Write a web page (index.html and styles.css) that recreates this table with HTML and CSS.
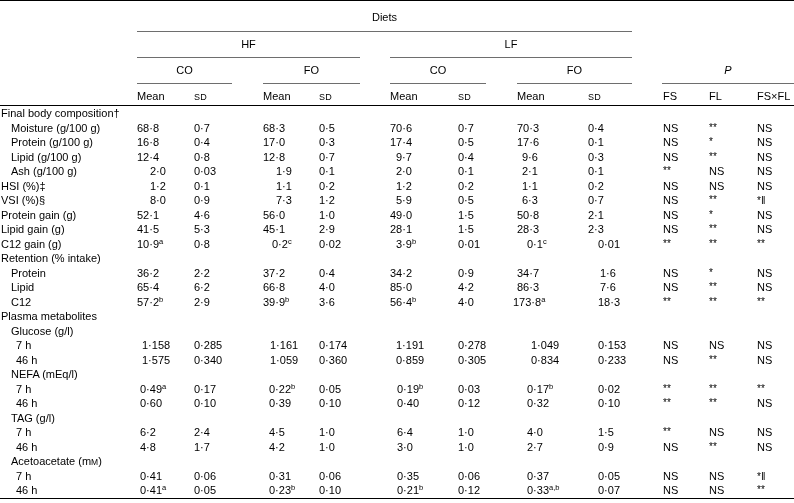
FILE: index.html
```html
<!DOCTYPE html>
<html>
<head>
<meta charset="utf-8">
<link rel="stylesheet" href="styles.css">
</head>
<body>
<div class="tbl">
  <div class="head">
    <div class="h r1 sp-diets ul">Diets</div>
    <div class="h r2 sp-hf ul">HF</div>
    <div class="h r2 sp-lf ul">LF</div>
    <div class="h r3 sp-co1 ul">CO</div>
    <div class="h r3 sp-fo1 ul">FO</div>
    <div class="h r3 sp-co2 ul">CO</div>
    <div class="h r3 sp-fo2 ul">FO</div>
    <div class="h r3 sp-p ul"><i>P</i></div>
    <div class="h r4 lft c2">Mean</div>
    <div class="h r4 lft c3"><span class="sc">SD</span></div>
    <div class="h r4 lft c5">Mean</div>
    <div class="h r4 lft c6"><span class="sc">SD</span></div>
    <div class="h r4 lft c8">Mean</div>
    <div class="h r4 lft c9"><span class="sc">SD</span></div>
    <div class="h r4 lft c11">Mean</div>
    <div class="h r4 lft c12"><span class="sc">SD</span></div>
    <div class="h r4 lft c14 fs">FS</div>
    <div class="h r4 lft c15">FL</div>
    <div class="h r4 lft c16">FS×FL</div>
  </div>
  <div class="body">
    <div class="sec l0">Final body composition†</div>

    <div class="l1">Moisture (g/100 g)</div><span>68·8</span><span>0·7</span><span>68·3</span><span>0·5</span><span>70·6</span><span>0·7</span><span>70·3</span><span>0·4</span><span>NS</span><span class="st">**</span><span>NS</span>

    <div class="l1">Protein (g/100 g)</div><span>16·8</span><span>0·4</span><span>17·0</span><span>0·3</span><span>17·4</span><span>0·5</span><span>17·6</span><span>0·1</span><span>NS</span><span class="st">*</span><span>NS</span>

    <div class="l1">Lipid (g/100 g)</div><span>12·4</span><span>0·8</span><span>12·8</span><span>0·7</span><span class="o6">9·7</span><span>0·4</span><span class="o5">9·6</span><span>0·3</span><span>NS</span><span class="st">**</span><span>NS</span>

    <div class="l1">Ash (g/100 g)</div><span class="o13">2·0</span><span>0·03</span><span class="o13">1·9</span><span>0·1</span><span class="o6">2·0</span><span>0·1</span><span class="o5">2·1</span><span>0·1</span><span class="st">**</span><span>NS</span><span>NS</span>

    <div class="l0">HSI (%)‡</div><span class="o13">1·2</span><span>0·1</span><span class="o13">1·1</span><span>0·2</span><span class="o6">1·2</span><span>0·2</span><span class="o5">1·1</span><span>0·2</span><span>NS</span><span>NS</span><span>NS</span>

    <div class="l0">VSI (%)§</div><span class="o13">8·0</span><span>0·9</span><span class="o13">7·3</span><span>1·2</span><span class="o6">5·9</span><span>0·5</span><span class="o5">6·3</span><span>0·7</span><span>NS</span><span class="st">**</span><span><span class="st">*</span>‖</span>

    <div class="l0">Protein gain (g)</div><span>52·1</span><span>4·6</span><span>56·0</span><span>1·0</span><span>49·0</span><span>1·5</span><span>50·8</span><span>2·1</span><span>NS</span><span class="st">*</span><span>NS</span>

    <div class="l0">Lipid gain (g)</div><span>41·5</span><span>5·3</span><span>45·1</span><span>2·9</span><span>28·1</span><span>1·5</span><span>28·3</span><span>2·3</span><span>NS</span><span class="st">**</span><span>NS</span>

    <div class="l0">C12 gain (g)</div><span>10·9<sup>a</sup></span><span>0·8</span><span class="o9">0·2<sup>c</sup></span><span>0·02</span><span class="o6">3·9<sup>b</sup></span><span>0·01</span><span class="o10">0·1<sup>c</sup></span><span class="o10">0·01</span><span class="st">**</span><span class="st">**</span><span class="st">**</span>

    <div class="sec l0">Retention (% intake)</div>

    <div class="l1">Protein</div><span>36·2</span><span>2·2</span><span>37·2</span><span>0·4</span><span>34·2</span><span>0·9</span><span>34·7</span><span class="o12">1·6</span><span>NS</span><span class="st">*</span><span>NS</span>

    <div class="l1">Lipid</div><span>65·4</span><span>6·2</span><span>66·8</span><span>4·0</span><span>85·0</span><span>4·2</span><span>86·3</span><span class="o12">7·6</span><span>NS</span><span class="st">**</span><span>NS</span>

    <div class="l1">C12</div><span>57·2<sup>b</sup></span><span>2·9</span><span>39·9<sup>b</sup></span><span>3·6</span><span>56·4<sup>b</sup></span><span>4·0</span><span class="om4">173·8<sup>a</sup></span><span class="o10">18·3</span><span class="st">**</span><span class="st">**</span><span class="st">**</span>

    <div class="sec l0">Plasma metabolites</div>
    <div class="sec l1">Glucose (g/l)</div>

    <div class="l2">7 h</div><span class="o5">1·158</span><span>0·285</span><span class="o7">1·161</span><span>0·174</span><span class="o6">1·191</span><span>0·278</span><span class="o14">1·049</span><span class="o10">0·153</span><span>NS</span><span>NS</span><span>NS</span>

    <div class="l2">46 h</div><span class="o5">1·575</span><span>0·340</span><span class="o7">1·059</span><span>0·360</span><span class="o6">0·859</span><span>0·305</span><span class="o14">0·834</span><span class="o10">0·233</span><span>NS</span><span class="st">**</span><span>NS</span>

    <div class="sec l1">NEFA (mEq/l)</div>

    <div class="l2">7 h</div><span class="o3">0·49<sup>a</sup></span><span>0·17</span><span class="o6">0·22<sup>b</sup></span><span>0·05</span><span class="o7">0·19<sup>b</sup></span><span>0·03</span><span class="o10">0·17<sup>b</sup></span><span class="o10">0·02</span><span class="st">**</span><span class="st">**</span><span class="st">**</span>

    <div class="l2">46 h</div><span class="o3">0·60</span><span>0·10</span><span class="o6">0·39</span><span>0·10</span><span class="o7">0·40</span><span>0·12</span><span class="o10">0·32</span><span class="o10">0·10</span><span class="st">**</span><span class="st">**</span><span>NS</span>

    <div class="sec l1">TAG (g/l)</div>

    <div class="l2">7 h</div><span class="o3">6·2</span><span>2·4</span><span class="o6">4·5</span><span>1·0</span><span class="o7">6·4</span><span>1·0</span><span class="o10">4·0</span><span class="o10">1·5</span><span class="st">**</span><span>NS</span><span>NS</span>

    <div class="l2">46 h</div><span class="o3">4·8</span><span>1·7</span><span class="o6">4·2</span><span>1·0</span><span class="o7">3·0</span><span>1·0</span><span class="o10">2·7</span><span class="o10">0·9</span><span>NS</span><span class="st">**</span><span>NS</span>

    <div class="sec l1">Acetoacetate (m<span class="scm">M</span>)</div>

    <div class="l2">7 h</div><span class="o3">0·41</span><span>0·06</span><span class="o6">0·31</span><span>0·06</span><span class="o7">0·35</span><span>0·06</span><span class="o10">0·37</span><span class="o10">0·05</span><span>NS</span><span>NS</span><span><span class="st">*</span>‖</span>

    <div class="l2">46 h</div><span class="o3">0·41<sup>a</sup></span><span>0·05</span><span class="o6">0·23<sup>b</sup></span><span>0·10</span><span class="o7">0·21<sup>b</sup></span><span>0·12</span><span class="o10">0·33<sup>a,b</sup></span><span class="o10">0·07</span><span>NS</span><span>NS</span><span class="st">**</span>
  </div>
</div>
</body>
</html>
```

FILE: styles.css
```css
html, body {
  margin: 0;
  padding: 0;
  background: #fff;
}

body {
  font-family: "Liberation Sans", Arial, sans-serif;
  font-size: 11px;
  color: #000;
  width: 794px;
}

.tbl {
  border-top: 1px solid #000;
  border-bottom: 1px solid #000;
  width: 794px;
  background: #fff;
  filter: grayscale(1);
}

.head {
  display: grid;
  grid-template-columns: 137px 57px 38px 31px 56px 41px 30px 68px 28px 31px 71px 44px 30px 47px 48px 37px;
  grid-template-rows: 31px 26px 26px 21px;
  border-bottom: 1px solid #000;
  line-height: 13px;
}

.h {
  box-sizing: border-box;
  text-align: center;
  white-space: nowrap;
}

.ul {
  border-bottom: 1px solid #6e6e6e;
}

.r1 { grid-row: 1; padding-top: 10px; }
.r2 { grid-row: 2; padding-top: 6px; }
.r3 { grid-row: 3; padding-top: 6px; }
.r4 { grid-row: 4; padding-top: 6px; }

.sp-diets { grid-column: 2 / 13; }
.sp-hf { grid-column: 2 / 7; }
.sp-lf { grid-column: 8 / 13; }
.sp-co1 { grid-column: 2 / 4; }
.sp-fo1 { grid-column: 5 / 7; }
.sp-co2 { grid-column: 8 / 10; }
.sp-fo2 { grid-column: 11 / 13; }
.sp-p { grid-column: 14 / 17; }

.lft { text-align: left; }
.c2 { grid-column: 2; }
.c3 { grid-column: 3; }
.c5 { grid-column: 5; }
.c6 { grid-column: 6; }
.c8 { grid-column: 8; }
.c9 { grid-column: 9; }
.c11 { grid-column: 11; }
.c12 { grid-column: 12; }
.c14 { grid-column: 14; }
.c15 { grid-column: 15; }
.c16 { grid-column: 16; }
.fs { padding-left: 1px; }

.sc {
  font-size: 9px;
  letter-spacing: 0.2px;
}

.scm {
  font-size: 8.5px;
}

.body {
  display: grid;
  grid-template-columns: 137px 57px 69px 56px 71px 68px 59px 71px 75px 46px 48px 37px;
  grid-auto-rows: 14.5px;
  line-height: 14.5px;
  white-space: nowrap;
}

.sec { grid-column: 1 / -1; }
.l0 { padding-left: 1px; }
.l1 { padding-left: 11px; }
.l2 { padding-left: 16px; }

.o3 { padding-left: 3px; }
.o5 { padding-left: 5px; }
.o6 { padding-left: 6px; }
.o7 { padding-left: 7px; }
.o9 { padding-left: 9px; }
.o10 { padding-left: 10px; }
.o12 { padding-left: 12px; }
.o13 { padding-left: 13px; }
.o14 { padding-left: 14px; }
.om4 { margin-left: -4px; }

sup {
  font-size: 7.5px;
  line-height: 0;
  vertical-align: 4px;
}

.st {
  font-size: 10px;
  color: #000;
}
```
